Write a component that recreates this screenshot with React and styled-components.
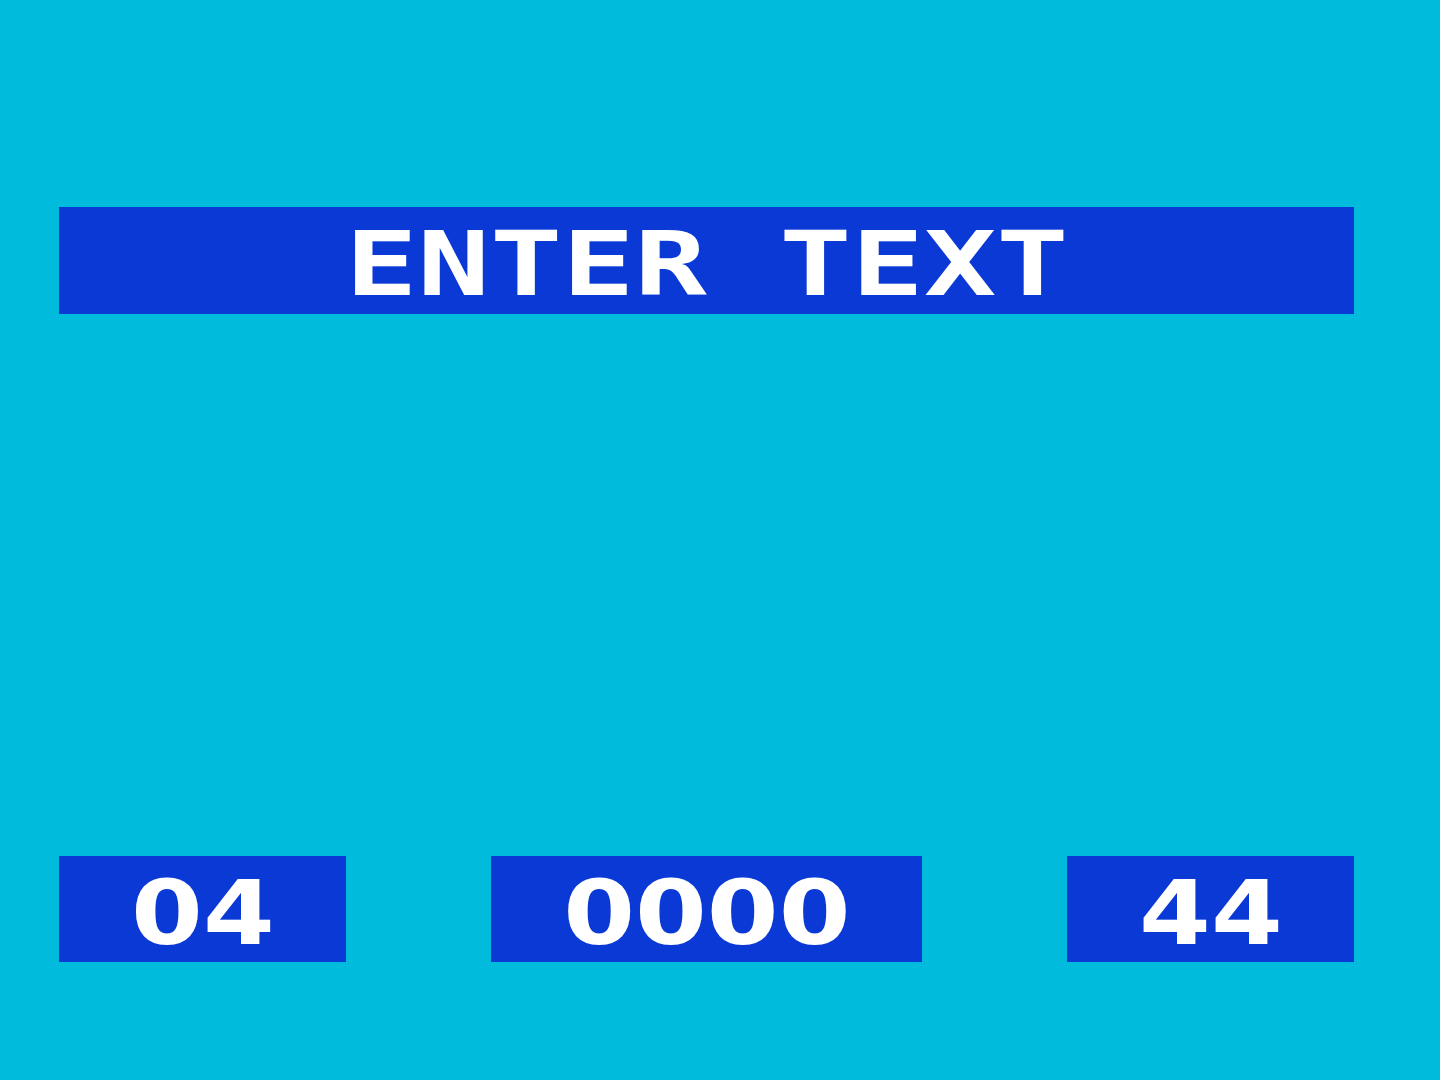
import React from "react";
import styled, { createGlobalStyle } from "styled-components";

const GlobalStyle = createGlobalStyle`
  html, body {
    margin: 0;
    padding: 0;
    background: #00bbdb;
  }
`;

const Screen = styled.div`
  width: 1440px;
  height: 1080px;
  box-sizing: border-box;
  padding: 207px 86px 0 59px;
  display: flex;
  flex-direction: column;
  background: #00bbdb;
  font-family: "DejaVu Sans Mono", "Liberation Mono", monospace;
  font-weight: bold;
  color: #ffffff;
`;

const Panel = styled.div`
  height: ${p => p.$height}px;
  width: ${p => (p.$width ? `${p.$width}px` : "auto")};
  background: #0b39d6;
  display: flex;
  align-items: center;
  justify-content: center;
  box-sizing: border-box;
  padding-top: 8px;
`;

/* digits use DejaVu Sans (plain zero); letters use the mono face */
const Label = styled.span`
  display: inline-block;
  font-family: ${p =>
    p.$digits
      ? `"DejaVu Sans", "Liberation Sans", sans-serif`
      : `"DejaVu Sans Mono", "Liberation Mono", monospace`};
  font-size: 89px;
  line-height: 1.2;
  white-space: pre;
  transform: scaleX(${p => (p.$digits ? 1.16 : 1.35)});
  transform-origin: center;
`;

const StatusRow = styled.div`
  margin-top: 542px;
  display: flex;
  justify-content: space-between;
`;

const stats = [
  { id: "lives", value: "04", width: 287 },
  { id: "score", value: "0000", width: 431 },
  { id: "time", value: "44", width: 287 },
];

export default function App() {
  return (
    <>
      <GlobalStyle />
      <Screen>
        <Panel $height={107}>
          <Label>ENTER TEXT</Label>
        </Panel>
        <StatusRow>
          {stats.map(stat => (
            <Panel key={stat.id} $height={106} $width={stat.width}>
              <Label $digits>{stat.value}</Label>
            </Panel>
          ))}
        </StatusRow>
      </Screen>
    </>
  );
}
